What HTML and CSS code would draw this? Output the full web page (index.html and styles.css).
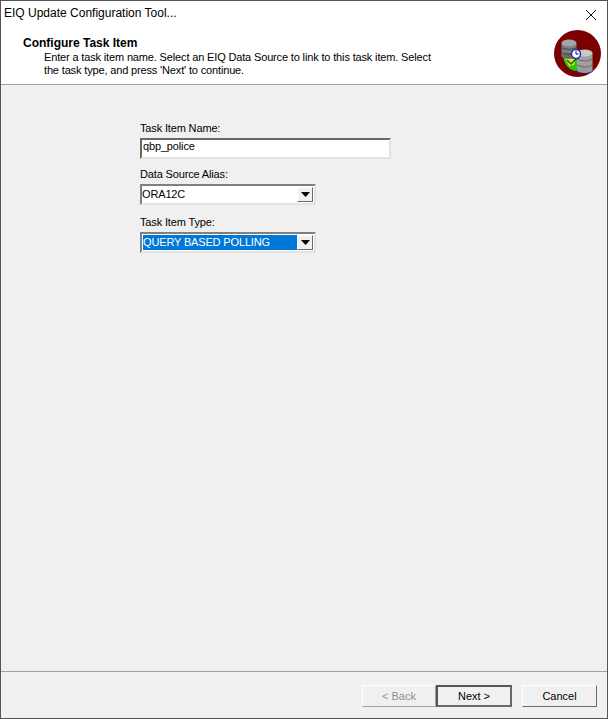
FILE: index.html
```html
<!DOCTYPE html>
<html lang="en">
<head>
<meta charset="utf-8">
<title>EIQ Update Configuration Tool</title>
<link rel="stylesheet" href="styles.css">
</head>
<body>
<div class="window">
  <div class="header">
    <div class="titlebar">
      <span class="title">EIQ Update Configuration Tool...</span>
      <svg class="close" width="12" height="12" viewBox="0 0 12 12"><path d="M1 1 L11 11 M11 1 L1 11" stroke="#111" stroke-width="1" fill="none"/></svg>
    </div>
    <div class="banner">
      <div class="banner-text">
        <h1 class="heading">Configure Task Item</h1>
        <p class="desc">Enter a task item name. Select an EIQ Data Source to link to this task item. Select<br>the task type, and press 'Next' to continue.</p>
      </div>
      <svg class="logo" width="47" height="47" viewBox="0 0 47 47">
        <circle cx="23.5" cy="23.5" r="23.5" fill="#7b0000"/>
        <path d="M9 27 L23 28 L24 41 Q12 41 9 27 Z" fill="#22c814"/>
        <path d="M11 28 L22 28 L20 35 L15 36 Z" fill="#e8e800"/>
        <path d="M13 30 L17 34 L22 29" fill="none" stroke="#063" stroke-width="1.5"/>
        <rect x="7.500" y="13" width="15" height="13" fill="#7d7d7d" stroke="#555" stroke-width="0.5"/>
        <ellipse cx="15" cy="13" rx="7.500" ry="3.500" fill="#a5a5a5"/>
        <ellipse cx="15" cy="26" rx="7.500" ry="3" fill="#6a6a6a"/>
        <path d="M7.500 18 Q15 21 22.500 18 M7.500 23 Q15 26 22.500 23" stroke="#4a4a4a" fill="none"/>
        <rect x="23" y="23" width="15.500" height="17" fill="#a0a0a0"/>
        <ellipse cx="30.750" cy="23" rx="7.750" ry="3.500" fill="#c8c8c8"/>
        <ellipse cx="30.750" cy="41" rx="8.250" ry="2.500" fill="#1a2bc8"/>
        <ellipse cx="30.750" cy="40" rx="7.750" ry="3" fill="#9a9a9a"/>
        <path d="M23 29 Q30.750 33 38.500 29 M23 35 Q30.750 39 38.500 35" stroke="#666" fill="none"/>
        <circle cx="22" cy="24" r="4.500" fill="#fff" stroke="#1a2bc8" stroke-width="1.500"/>
        <path d="M22 21 V24 H24.500" stroke="#111" fill="none"/>
      </svg>
    </div>
  </div>
  <main class="content">
    <div class="form">
      <label class="label">Task Item Name:</label>
      <div class="field field-name">qbp_police</div>
      <label class="label label-gap">Data Source Alias:</label>
      <div class="field combo">
        <span class="combo-value">ORA12C</span>
        <span class="arrow-btn"><svg width="9" height="5" viewBox="0 0 9 5"><path d="M0 0 H9 L4.500 5 Z" fill="#000"/></svg></span>
      </div>
      <label class="label label-gap label-wide">Task Item Type:</label>
      <div class="field combo">
        <span class="combo-value selected">QUERY BASED POLLING</span>
        <span class="arrow-btn"><svg width="9" height="5" viewBox="0 0 9 5"><path d="M0 0 H9 L4.500 5 Z" fill="#000"/></svg></span>
      </div>
    </div>
  </main>
  <footer class="footer">
    <div class="wizard-buttons">
      <button class="btn btn-back" disabled>&lt; Back</button>
      <button class="btn btn-default">Next &gt;</button>
    </div>
    <button class="btn">Cancel</button>
  </footer>
</div>
</body>
</html>
```
FILE: styles.css
```css
* { box-sizing: border-box; }
html, body { margin: 0; padding: 0; }
body {
  width: 608px;
  height: 719px;
  overflow: hidden;
  font-family: "Liberation Sans", Arial, sans-serif;
  font-size: 11px;
  letter-spacing: -0.15px;
  color: #000;
}
.window {
  width: 608px;
  height: 719px;
  display: flex;
  flex-direction: column;
  border: 1px solid #555;
  background: #f0f0f0;
}
.header {
  height: 84px;
  background: #fff;
  border-bottom: 1px solid #a0a0a0;
  flex: none;
}
.titlebar {
  height: 29px;
  padding: 5px 10px 0 3px;
  display: flex;
  justify-content: space-between;
  align-items: flex-start;
}
.title { font-size: 12px; line-height: 15px; letter-spacing: 0; }
.close { margin-top: 3px; }
.banner {
  display: flex;
  justify-content: space-between;
  padding: 0 6px 0 22px;
}
.banner-text { padding-top: 6px; }
.heading {
  margin: 0;
  font-size: 12px;
  letter-spacing: 0;
  line-height: 14px;
  font-weight: bold;
}
.desc {
  margin: 1px 0 0 21px;
  line-height: 13px;
}
.logo { flex: none; }
.content { flex: 1; padding: 36px 0 0 139px; }
.form { display: flex; flex-direction: column; align-items: flex-start; }
.label { line-height: 14px; height: 15px; margin-bottom: 2px; }
.label-gap { margin-top: 8px; }
.label-wide { margin-top: 10px; }
.field {
  background: #fff;
  border: 2px solid;
  border-color: #696969 #e3e3e3 #e3e3e3 #696969;
}
.field-name { width: 251px; height: 21px; padding: 0 0 0 1px; line-height: 13px; }
.combo {
  width: 176px;
  height: 21px;
  display: flex;
  padding: 1px;
  border-color: #808080 #e3e3e3 #e3e3e3 #808080;
}
.combo-value { flex: 1; margin-left: -1px; line-height: 15px; }
.selected {
  margin-left: 0;
  background: #0078d7;
  color: #fff;
}
.arrow-btn {
  width: 16px;
  margin-left: 0;
  background: #f0f0f0;
  border: 1px solid;
  border-color: #fff #696969 #696969 #fff;
  display: flex;
  align-items: center;
  justify-content: center;
}
.footer {
  flex: none;
  height: 47px;
  border-top: 1px solid #a0a0a0;
  padding: 13px 10px 0 361px;
  display: flex;
  justify-content: space-between;
  align-items: flex-start;
}
.wizard-buttons { display: flex; }
.btn {
  width: 75px;
  height: 22px;
  padding: 0;
  font: 11px "Liberation Sans", Arial, sans-serif;
  color: #000;
  background: #f0f0f0;
  border: 1px solid;
  border-color: #fff #696969 #696969 #fff;
}
.btn-back { width: 74px; }
.btn:disabled { color: #909090; border-color: #fff #a0a0a0 #a0a0a0 #fff; }
.btn-default { width: 76px; border: 2px solid; border-color: #555 #696969 #696969 #555; }
```
